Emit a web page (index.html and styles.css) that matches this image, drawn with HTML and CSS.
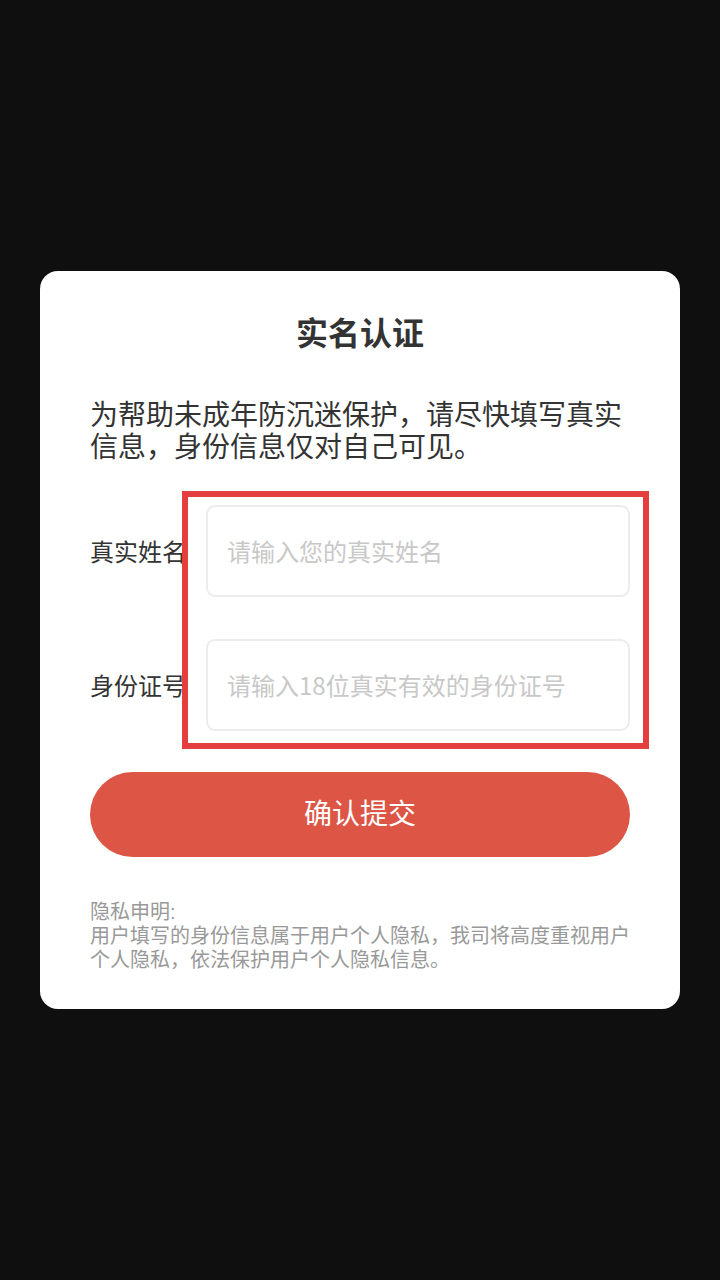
FILE: index.html
```html
<!DOCTYPE html>
<html lang="zh-CN">
<head>
<meta charset="utf-8">
<title>实名认证</title>
<link rel="stylesheet" href="styles.css">
</head>
<body>
<div class="card">
  <h1 class="title">实名认证</h1>
  <p class="desc">为帮助未成年防沉迷保护，请尽快填写真实信息，身份信息仅对自己可见。</p>
  <div class="form">
    <div class="row">
      <label class="label">真实姓名</label>
      <input class="field" type="text" placeholder="请输入您的真实姓名">
    </div>
    <div class="row">
      <label class="label">身份证号</label>
      <input class="field" type="text" placeholder="请输入18位真实有效的身份证号">
    </div>
    <div class="highlight"></div>
  </div>
  <button class="submit">确认提交</button>
  <div class="privacy">
    <p class="privacy-title">隐私申明:</p>
    <p class="privacy-text">用户填写的身份信息属于用户个人隐私，我司将高度重视用户个人隐私，依法保护用户个人隐私信息。</p>
  </div>
</div>
</body>
</html>
```
FILE: styles.css
```css
html, body {
  margin: 0;
  padding: 0;
  background: #0f0f0f;
  height: 1280px;
  overflow: hidden;
}
body {
  font-family: "Noto Sans CJK SC", "Noto Sans", sans-serif;
  padding-top: 271px;
  box-sizing: border-box;
}
.card {
  margin: 0 40px;
  width: 640px;
  box-sizing: border-box;
  background: #fff;
  border-radius: 18px;
  padding: 40px 50px 37px;
}
.title {
  margin: 0;
  text-align: center;
  font-size: 32px;
  line-height: 40px;
  font-weight: 700;
  color: #333;
}
.desc {
  margin: 46px 0 0;
  font-size: 28px;
  line-height: 32px;
  color: #333;
}
.form {
  position: relative;
  margin-top: 44px;
  display: flex;
  flex-direction: column;
  gap: 42px;
}
.row {
  display: flex;
  align-items: center;
}
.label {
  width: 116px;
  flex: none;
  font-size: 24px;
  line-height: 32px;
  color: #333;
  white-space: nowrap;
}
.field {
  flex: 1;
  min-width: 0;
  height: 92px;
  box-sizing: border-box;
  border: 2px solid #ececec;
  border-radius: 9px;
  padding: 0 19px 2px;
  font-family: inherit;
  font-size: 24px;
  color: #333;
  outline: none;
  background: #fff;
}
.field::placeholder {
  color: #c8c8c8;
}
.highlight {
  position: absolute;
  left: 92px;
  top: -14px;
  width: 467px;
  height: 258px;
  box-sizing: border-box;
  border: 6px solid #e53e3e;
  pointer-events: none;
}
.submit {
  display: block;
  width: 100%;
  height: 85px;
  margin-top: 41px;
  border: none;
  border-radius: 43px;
  background: #dd5545;
  color: #fff;
  font-family: inherit;
  font-size: 28px;
  padding: 0 0 5px;
}
.privacy {
  margin-top: 43px;
  color: #999;
  font-family: "Liberation Sans", "Noto Sans CJK SC", sans-serif;
  font-size: 20px;
  line-height: 24px;
}
.privacy-title,
.privacy-text {
  margin: 0;
}
```
